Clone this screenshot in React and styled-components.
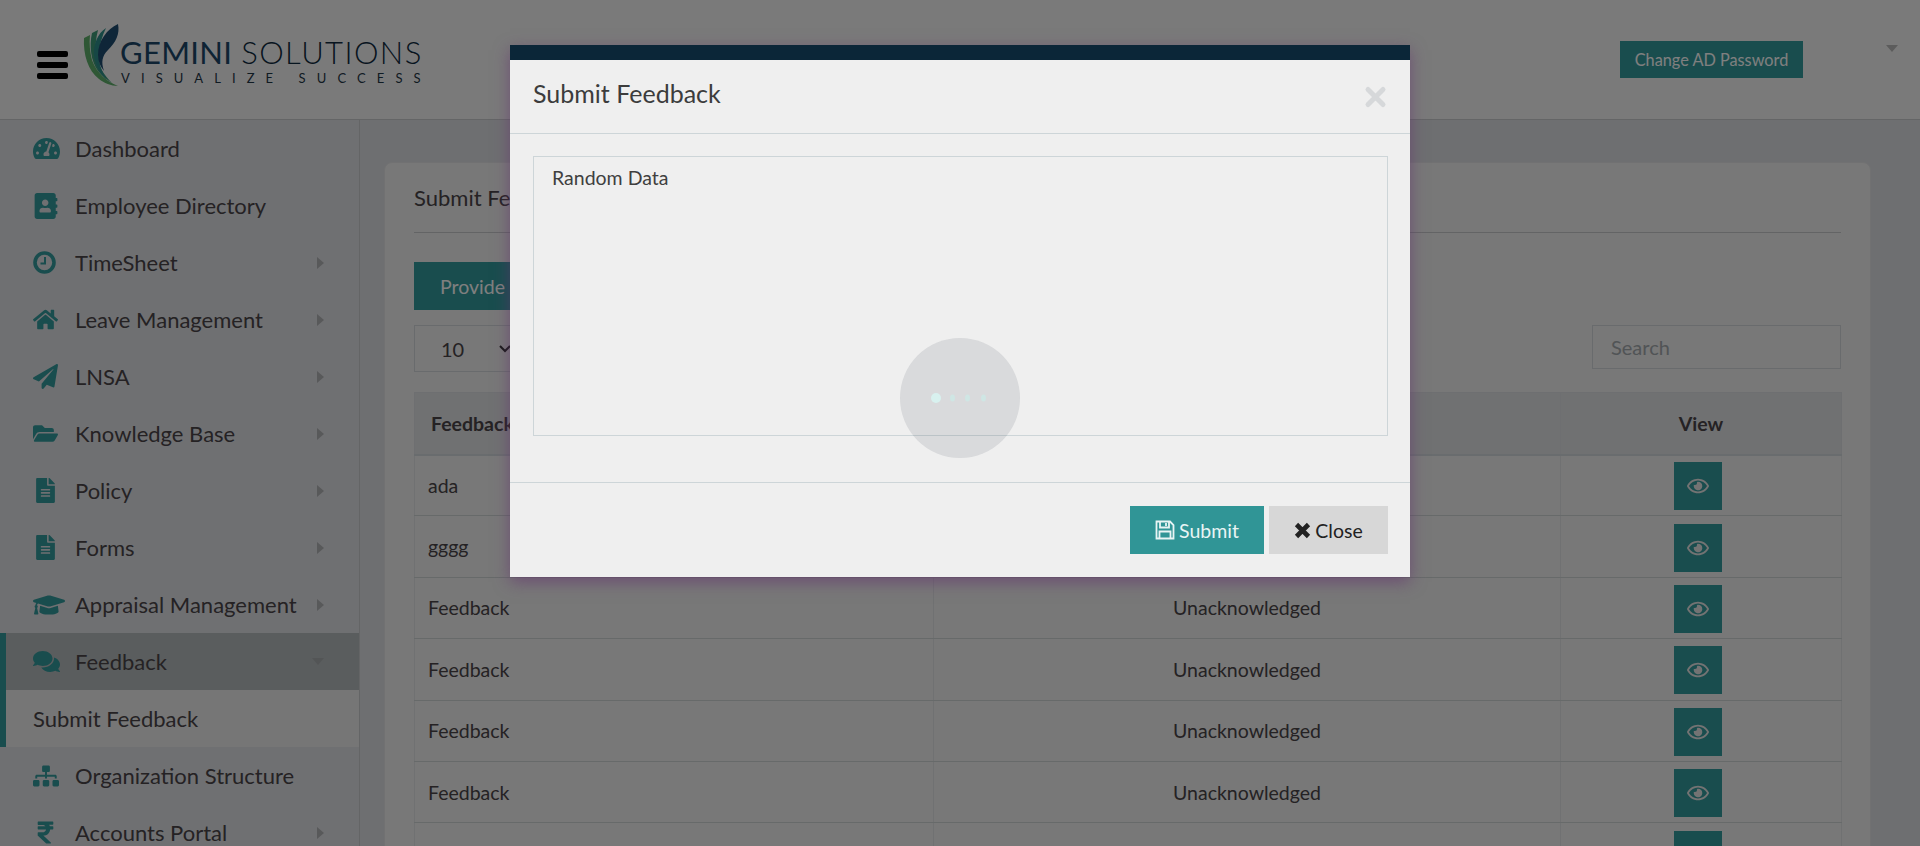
import styled, { createGlobalStyle } from 'styled-components'
import {
  FaTachometerAlt, FaAddressBook, FaHome, FaPaperPlane, FaFolderOpen,
  FaFileAlt, FaGraduationCap, FaComments, FaSitemap, FaRupeeSign, FaRegEye,
} from 'react-icons/fa'

const GlobalStyle = createGlobalStyle`
  html, body { margin: 0; padding: 0; height: 100%; overflow: hidden; }
  body { font-family: Lato, "Open Sans", sans-serif; color: #4a4a4a; }
  * { box-sizing: border-box; }
`

const Page = styled.div`
  position: relative;
  width: 1920px;
  height: 846px;
  overflow: hidden;
  background: #dcdee2;
`

const Header = styled.header`
  height: 120px;
  display: flex;
  align-items: flex-start;
  background: #f5f5f5;
  border-bottom: 1px solid #c8cacc;
`

const Burger = styled.div`
  width: 31px;
  margin: 51px 0 0 37px;
  display: flex;
  flex-direction: column;
  gap: 5px;
  span {
    height: 6px;
    border-radius: 2px;
    background: #000;
  }
`

const Logo = styled.div`
  display: flex;
  margin: 24px 0 0 15px;
  svg { width: 37px; height: 63px; flex: none; }
`

const LogoText = styled.div`
  padding-top: 13px;
  line-height: 1;
`

const LogoName = styled.div`
  font-size: 31px;
  height: 35px;
  white-space: nowrap;
  b { font-weight: 400; letter-spacing: 0.3px; color: #1c4768; margin-right: 9px; }
  span { font-weight: 300; letter-spacing: 1.4px; color: #0f2a3e; }
`

const LogoTag = styled.div`
  font-size: 13px;
  letter-spacing: 11.1px;
  color: #1f3646;
  white-space: nowrap;
  padding-left: 1px;
`

const ChangePassword = styled.button`
  margin: 41px 0 0 auto;
  width: 183px;
  height: 37px;
  border: 0;
  padding: 0;
  background: #339a9c;
  color: #fff;
  font: 400 16.3px Lato, sans-serif;
`

const TopCaret = styled.div`
  margin: 45px 22px 0 83px;
  border-left: 6px solid transparent;
  border-right: 6px solid transparent;
  border-top: 7px solid #b8b8b8;
`

const Body = styled.div`
  display: flex;
  height: 726px;
`

const Sidebar = styled.nav`
  width: 360px;
  flex: none;
  background: #dfe0e4;
  border-right: 1px solid #c8cacc;
`

const MenuItem = styled.div`
  height: 57px;
  display: flex;
  align-items: center;
  padding-left: ${p => (p.$active || p.$sub ? 27 : 33)}px;
  padding-right: 35px;
  border-left: ${p => (p.$active || p.$sub ? '6px solid #339a9c' : '0')};
  background: ${p => (p.$active ? '#b5babc' : p.$sub ? '#ececec' : 'transparent')};
  font-size: 22px;
  color: #4a4548;
`

const MenuIcon = styled.span`
  width: 42px;
  flex: none;
  display: flex;
  align-items: center;
  color: #339a9c;
  font-size: ${p => p.$size || 25}px;
`

const MenuArrow = styled.span`
  margin-left: auto;
  border-style: solid;
  border-color: transparent;
  border-width: ${p => (p.$open ? '7px 6px 0 6px' : '6px 0 6px 7px')};
  border-top-color: ${p => (p.$open ? '#a6abad' : 'transparent')};
  border-left-color: ${p => (p.$open ? 'transparent' : '#b0b2b5')};
`

const Content = styled.main`
  flex: 1;
  min-width: 0;
  padding: 42px 49px 0 24px;
`

const Card = styled.section`
  height: 700px;
  padding: 0 29px;
  background: #f0f0f0;
  border: 1px solid #e2e3e5;
  border-radius: 8px;
`

const CardTitle = styled.h2`
  margin: 0;
  height: 70px;
  display: flex;
  align-items: center;
  font-size: 22px;
  font-weight: 400;
  color: #4a4548;
  border-bottom: 1px solid #c6c9ca;
`

const ProvideButton = styled.button`
  display: block;
  margin-top: 29px;
  width: 230px;
  height: 48px;
  border: 0;
  padding: 0 0 0 26px;
  text-align: left;
  background: #339a9c;
  color: #fff;
  font: 400 19.5px Lato, sans-serif;
`

const Controls = styled.div`
  margin-top: 15px;
  display: flex;
  justify-content: space-between;
  align-items: flex-start;
`

const PageSize = styled.div`
  width: 116px;
  height: 47px;
  padding: 0 18px 0 26px;
  display: flex;
  align-items: center;
  justify-content: space-between;
  border: 1px solid #d2d6da;
  font-size: 20px;
  color: #4a4548;
  svg { width: 12px; height: 8px; }
`

const SearchBox = styled.input`
  width: 249px;
  height: 44px;
  padding: 0 18px;
  border: 1px solid #d2d6da;
  background: transparent;
  font: 400 20px Lato, sans-serif;
  &::placeholder { color: #a3a8ad; opacity: 1; }
`

const Table = styled.table`
  margin-top: 20px;
  width: 1427px;
  table-layout: fixed;
  border-collapse: collapse;
  border: 1px solid #e0e2e4;
  font-size: 19.5px;
  color: #4a4548;
  th {
    height: 62px;
    padding: 0 16px;
    background: #e0e2e5;
    font-size: 19.5px;
    font-weight: 700;
    text-align: left;
    border: 1px solid #dcdfe2;
    border-bottom: 2px solid #d3d8dc;
  }
  th.center, td.center { text-align: center; }
  td {
    height: 61.4px;
    padding: 0 13px;
    border: 1px solid #e0e2e4;
    border-bottom-color: #cfd4d4;
  }
`

const ViewButton = styled.span`
  width: 48px;
  height: 48px;
  margin: 2px 6px 0 0;
  display: inline-flex;
  align-items: center;
  justify-content: center;
  vertical-align: middle;
  background: #339a9c;
  color: #e6e6e6;
  font-size: 22px;
`

const Backdrop = styled.div`
  position: absolute;
  inset: 0;
  background: rgba(0, 0, 0, 0.5);
`

const Modal = styled.div`
  position: absolute;
  left: 510px;
  top: 45px;
  width: 900px;
  height: 532px;
  display: flex;
  flex-direction: column;
  background: #efefef;
  border-top: 15px solid #0b2638;
  box-shadow: 0 5px 15px rgba(100, 50, 110, 0.6);
`

const ModalHead = styled.div`
  height: 74px;
  flex: none;
  padding: 0 23px;
  display: flex;
  align-items: center;
  justify-content: space-between;
  border-bottom: 1px solid #cdd5d8;
  h3 {
    margin: 0;
    padding-bottom: 7px;
    font-size: 25px;
    font-weight: 400;
    color: #3c3c3c;
  }
`

const ModalClose = styled.svg`
  width: 23px;
  height: 24px;
  margin-right: 0;
`

const ModalBody = styled.div`
  flex: 1;
  padding: 22px 22px 0 23px;
`

const Feedback = styled.textarea`
  display: block;
  width: 855px;
  height: 280px;
  padding: 9px 18px;
  border: 1px solid #cdd5d8;
  background: transparent;
  resize: none;
  outline: 0;
  font: 400 19.5px/24px Lato, sans-serif;
  color: #3f3f3f;
`

const ModalFoot = styled.div`
  height: 95px;
  flex: none;
  padding: 23px 22px 0;
  display: flex;
  justify-content: flex-end;
  gap: 5px;
  border-top: 1px solid #cdd5d8;
`

const FootButton = styled.button`
  height: 48px;
  width: ${p => (p.$primary ? 134 : 119)}px;
  border: 0;
  padding: 0;
  display: flex;
  align-items: center;
  justify-content: center;
  gap: 4px;
  background: ${p => (p.$primary ? '#309596' : '#d7d7d7')};
  color: ${p => (p.$primary ? '#e8f4f4' : '#222')};
  font: 400 19.5px Lato, sans-serif;
`

const Spinner = styled.div`
  position: absolute;
  left: 900px;
  top: 338px;
  width: 120px;
  height: 120px;
  border-radius: 50%;
  background: rgba(60, 65, 80, 0.12);
`

const SpinnerDot = styled.i`
  position: absolute;
  top: 50%;
  left: ${p => p.$x}px;
  width: ${p => (p.$big ? 10 : 5)}px;
  height: ${p => (p.$big ? 10 : 7)}px;
  border-radius: 50%;
  transform: translateY(-50%);
  background: ${p => (p.$big ? '#d8f1ef' : '#cfe6e4')};
`

const ClockIcon = () => (
  <svg width="23" height="23" viewBox="0 0 23 23" fill="none" stroke="currentColor">
    <circle cx="11.5" cy="11.5" r="9.5" strokeWidth="3.6" />
    <path d="M12 6v6.5H7.5" strokeWidth="2" />
  </svg>
)

const SaveIcon = () => (
  <svg width="20" height="20" viewBox="0 0 20 20" fill="none" stroke="currentColor" strokeWidth="1.8">
    <path d="M2 1.5h13l3.5 3.5v13.5H1.5V1.5z" />
    <path d="M5 1.5v6h9v-6M11 3v3" />
    <path d="M4.5 18.5v-7h11v7" />
  </svg>
)

const CrossIcon = () => (
  <svg width="17" height="17" viewBox="0 0 17 17" fill="none" stroke="currentColor" strokeWidth="4.6">
    <path d="M2.5 2.5l12 12M14.5 2.5l-12 12" />
  </svg>
)

const menu = [
  { label: 'Dashboard', icon: FaTachometerAlt, size: 27 },
  { label: 'Employee Directory', icon: FaAddressBook, size: 26 },
  { label: 'TimeSheet', icon: ClockIcon, arrow: true },
  { label: 'Leave Management', icon: FaHome, arrow: true },
  { label: 'LNSA', icon: FaPaperPlane, arrow: true },
  { label: 'Knowledge Base', icon: FaFolderOpen, arrow: true },
  { label: 'Policy', icon: FaFileAlt, arrow: true },
  { label: 'Forms', icon: FaFileAlt, arrow: true },
  { label: 'Appraisal Management', icon: FaGraduationCap, size: 32, arrow: true },
  { label: 'Feedback', icon: FaComments, size: 27, arrow: true, active: true },
  { label: 'Submit Feedback', sub: true },
  { label: 'Organization Structure', icon: FaSitemap, size: 26 },
  { label: 'Accounts Portal', icon: FaRupeeSign, arrow: true },
]

const rows = ['ada', 'gggg', 'Feedback', 'Feedback', 'Feedback', 'Feedback', 'Feedback']

const App = () => {
  return (
    <Page>
      <GlobalStyle />
      <Header>
        <Burger><span /><span /><span /></Burger>
        <Logo>
          <svg viewBox="0 0 37 63">
            <path d="M1 14C0 30 5 47 16 55C21 59 28 62 35 62C25 58 14 50 9 36C7 28 6 20 7 11Z" fill="#5fae6b" />
            <path d="M9 9C6 22 8 38 15 47C19 52 24 56 29 59C21 51 15 42 13 30C12 22 13 14 15 6Z" fill="#3f9a78" />
            <path d="M23 4C15 9 10 20 11 32C12 41 17 50 24 56C18 46 15 38 16 28C17 20 19 12 23 4Z" fill="#2f8f8a" />
            <path d="M35 0C24 5 15 17 15 31C15 37 17 42 21 47C18 38 19 32 25 26C33 18 37 10 35 0Z" fill="#1f4d70" />
          </svg>
          <LogoText>
            <LogoName><b>GEMINI</b><span>SOLUTIONS</span></LogoName>
            <LogoTag>VISUALIZE SUCCESS</LogoTag>
          </LogoText>
        </Logo>
        <ChangePassword>Change AD Password</ChangePassword>
        <TopCaret />
      </Header>

      <Body>
        <Sidebar>
          {menu.map(item => (
            <MenuItem key={item.label} $active={item.active} $sub={item.sub}>
              {item.icon && <MenuIcon $size={item.size}><item.icon /></MenuIcon>}
              {item.label}
              {item.arrow && <MenuArrow $open={item.active} />}
            </MenuItem>
          ))}
        </Sidebar>

        <Content>
          <Card>
            <CardTitle>Submit Feedback</CardTitle>
            <ProvideButton>Provide Feedback</ProvideButton>
            <Controls>
              <PageSize>
                10
                <svg viewBox="0 0 12 8"><path d="M1 1l5 5 5-5" fill="none" stroke="#333" strokeWidth="2" /></svg>
              </PageSize>
              <SearchBox placeholder="Search" />
            </Controls>
            <Table>
              <colgroup>
                <col style={{ width: 519 }} />
                <col style={{ width: 627 }} />
                <col style={{ width: 281 }} />
              </colgroup>
              <thead>
                <tr>
                  <th>Feedback</th>
                  <th className="center">Status</th>
                  <th className="center">View</th>
                </tr>
              </thead>
              <tbody>
                {rows.map((text, i) => (
                  <tr key={i}>
                    <td>{text}</td>
                    <td className="center">Unacknowledged</td>
                    <td className="center"><ViewButton><FaRegEye /></ViewButton></td>
                  </tr>
                ))}
              </tbody>
            </Table>
          </Card>
        </Content>
      </Body>

      <Backdrop />

      <Modal>
        <ModalHead>
          <h3>Submit Feedback</h3>
          <ModalClose viewBox="0 0 23 24">
            <path d="M4 4.5l15 15M19 4.5l-15 15" stroke="#d6d8da" strokeWidth="5" strokeLinecap="round" fill="none" />
          </ModalClose>
        </ModalHead>
        <ModalBody>
          <Feedback defaultValue="Random Data" />
        </ModalBody>
        <ModalFoot>
          <FootButton $primary><SaveIcon />Submit</FootButton>
          <FootButton><CrossIcon />Close</FootButton>
        </ModalFoot>
      </Modal>

      <Spinner>
        <SpinnerDot $x={31} $big />
        <SpinnerDot $x={50} />
        <SpinnerDot $x={65} />
        <SpinnerDot $x={81} />
      </Spinner>
    </Page>
  )
}

export default App
